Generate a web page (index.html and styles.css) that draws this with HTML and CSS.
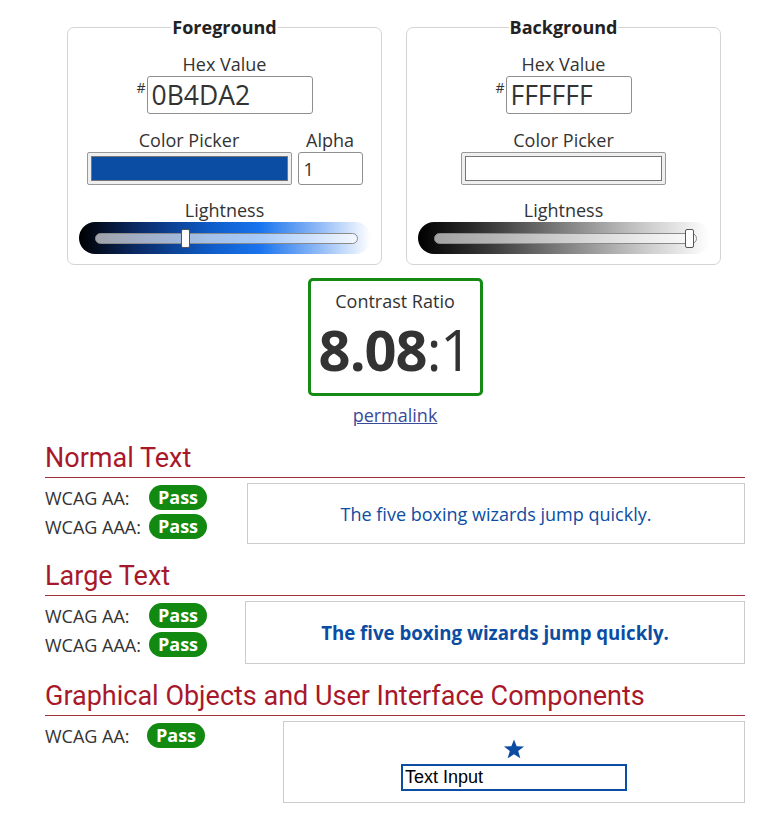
FILE: index.html
```html
<!DOCTYPE html>
<html lang="en">
<head>
<meta charset="utf-8">
<title>Contrast Checker</title>
<link rel="stylesheet" href="styles.css">
</head>
<body>
<main class="page">
  <div class="pickers">
    <fieldset class="picker">
      <legend class="picker-title">Foreground</legend>
      <div class="label">Hex Value</div>
      <div class="hex-row">
        <span class="hash">#</span>
        <input class="hex-input hex-fg" type="text" value="0B4DA2">
      </div>
      <div class="picker-row">
        <div class="field">
          <div class="label">Color Picker</div>
          <div class="swatch"><div class="swatch-fill fill-fg"></div></div>
        </div>
        <div class="field">
          <div class="label">Alpha</div>
          <input class="alpha-input" type="text" value="1">
        </div>
      </div>
      <div class="label">Lightness</div>
      <div class="slider slider-fg">
        <div class="track"><div class="thumb" style="left: calc(34% - 3px)"></div></div>
      </div>
    </fieldset>
    <fieldset class="picker">
      <legend class="picker-title">Background</legend>
      <div class="label">Hex Value</div>
      <div class="hex-row">
        <span class="hash">#</span>
        <input class="hex-input hex-bg" type="text" value="FFFFFF">
      </div>
      <div class="picker-row">
        <div class="field">
          <div class="label">Color Picker</div>
          <div class="swatch"><div class="swatch-fill fill-bg"></div></div>
        </div>
      </div>
      <div class="label">Lightness</div>
      <div class="slider slider-bg">
        <div class="track"><div class="thumb" style="left: calc(100% - 11px)"></div></div>
      </div>
    </fieldset>
  </div>

  <div class="ratio-wrap">
    <div class="ratio-box">
      <div class="ratio-label">Contrast Ratio</div>
      <div class="ratio-value"><b>8.08</b>:1</div>
    </div>
    <a class="permalink" href="#">permalink</a>
  </div>

  <section class="result result-normal">
    <h2 class="result-title">Normal Text</h2>
    <div class="result-body">
      <div class="checks">
        <div class="check"><span class="check-label">WCAG AA:</span><span class="pass">Pass</span></div>
        <div class="check"><span class="check-label">WCAG AAA:</span><span class="pass">Pass</span></div>
      </div>
      <div class="sample sample-normal">The five boxing wizards jump quickly.</div>
    </div>
  </section>

  <section class="result result-large">
    <h2 class="result-title">Large Text</h2>
    <div class="result-body">
      <div class="checks">
        <div class="check"><span class="check-label">WCAG AA:</span><span class="pass">Pass</span></div>
        <div class="check"><span class="check-label">WCAG AAA:</span><span class="pass">Pass</span></div>
      </div>
      <div class="sample sample-large">The five boxing wizards jump quickly.</div>
    </div>
  </section>

  <section class="result result-ui">
    <h2 class="result-title">Graphical Objects and User Interface Components</h2>
    <div class="result-body">
      <div class="checks checks-ui">
        <div class="check"><span class="check-label label-ui">WCAG AA:</span><span class="pass">Pass</span></div>
      </div>
      <div class="sample sample-ui">
        <svg class="star" width="22" height="22" viewBox="0 0 24 24" aria-hidden="true">
          <polygon points="12,1.5 14.9,9 23,9.3 16.6,14.3 18.9,22.2 12,17.6 5.1,22.2 7.4,14.3 1,9.3 9.1,9" fill="#0B4DA2"/>
        </svg>
        <input class="ui-input" type="text" value="Text Input">
      </div>
    </div>
  </section>
</main>
</body>
</html>
```

FILE: styles.css
```css
* { box-sizing: border-box; }

body {
  margin: 0;
  background: #fff;
  font-family: "Open Sans", "Liberation Sans", sans-serif;
  color: #333;
  font-size: 18px;
}

.page {
  width: 700px;
  margin-left: 45px;
  padding-top: 15px;
  padding-bottom: 10px;
}

.pickers {
  display: flex;
  gap: 24px;
  margin-left: 22px;
}

.picker {
  width: 315px;
  margin: 0;
  padding: 13px 10px 10px;
  border: 1px solid #d4d4d4;
  border-radius: 7px;
  display: flex;
  flex-direction: column;
  align-items: center;
  min-width: 0;
}

.picker-title {
  padding: 0 1px;
  margin: 0 auto;
  font-weight: 700;
  font-size: 18px;
  line-height: 24px;
  color: #222;
}

.label {
  font-size: 18px;
  line-height: 24px;
  color: #333;
  text-align: center;
}

.hex-row {
  display: flex;
  align-items: flex-start;
  margin-bottom: 14px;
}

.hash {
  font-size: 14px;
  line-height: 14px;
  margin-top: 5px;
  margin-right: 1px;
  color: #333;
}

.hex-input {
  height: 38px;
  border: 1px solid #8f8f8f;
  border-radius: 3px;
  font-family: "Open Sans", sans-serif;
  font-size: 26.5px;
  color: #333;
  padding: 0 4px;
  background: #fff;
}

.hex-fg { width: 166px; }
.hex-bg { width: 126px; }

.picker-row {
  display: flex;
  gap: 6px;
  margin-bottom: 13px;
}

.field {
  display: flex;
  flex-direction: column;
  align-items: center;
}

.swatch {
  width: 205px;
  height: 33px;
  border: 1px solid #999;
  border-radius: 2px;
  background: #efefef;
  padding: 3px;
}

.swatch-fill {
  width: 100%;
  height: 100%;
  border: 1px solid #767676;
}

.fill-fg { background: #0B4DA2; }
.fill-bg { background: #fff; }

.alpha-input {
  width: 65px;
  height: 33px;
  border: 1px solid #8f8f8f;
  border-radius: 3px;
  font-family: "Open Sans", sans-serif;
  font-size: 18px;
  color: #333;
  padding: 0 5px;
}

.slider {
  width: 292px;
  height: 32px;
  border-radius: 16px;
  padding: 11px 13px 10px 16px;
}

.slider-fg {
  background: linear-gradient(to right, #000 0%, #0b2a66 20%, #0e5cc8 45%, #1a74ee 62%, #8fb9f6 82%, #fff 100%);
}

.slider-bg {
  background: linear-gradient(to right, #000 0%, #3a3a3a 25%, #808080 50%, #c4c4c4 75%, #fff 100%);
}

.track {
  position: relative;
  height: 11px;
  border: 1px solid #8a8a8a;
  border-radius: 6px;
  background: rgba(255, 255, 255, 0.62);
}

.thumb {
  position: absolute;
  top: -5px;
  width: 9px;
  height: 19px;
  background: #fff;
  border: 1px solid #555;
  border-radius: 2px;
}

.ratio-wrap {
  display: flex;
  flex-direction: column;
  align-items: center;
  margin-top: 13px;
}

.ratio-box {
  width: 175px;
  height: 118px;
  border: 3px solid #158a15;
  border-radius: 5px;
  display: flex;
  flex-direction: column;
  align-items: center;
  padding-top: 8px;
}

.ratio-label {
  font-size: 18px;
  line-height: 24px;
  color: #333;
}

.ratio-value {
  font-size: 56px;
  line-height: 64px;
  color: #333;
  margin-top: 4px;
  letter-spacing: -1px;
}

.ratio-value b { font-weight: 700; }

.permalink {
  margin-top: 7px;
  font-size: 18px;
  line-height: 24px;
  color: #3a4a9c;
  text-decoration: underline;
}

.result { margin-top: 16px; }

.result-title {
  margin: 0;
  font-family: Roboto, "Liberation Sans", sans-serif;
  font-weight: 400;
  font-size: 27px;
  line-height: 30px;
  color: #a8182b;
  padding-bottom: 4px;
  border-bottom: 1px solid #a0303a;
}

.result-body {
  display: flex;
  margin-top: 5px;
}

.checks {
  width: 200px;
  display: flex;
  flex-direction: column;
}

.check {
  display: flex;
  align-items: center;
  height: 29px;
}

.check-label {
  width: 104px;
  font-size: 18px;
  color: #333;
}

.label-ui { width: 102px; }

.pass {
  background: #128a12;
  color: #fff;
  font-weight: 700;
  font-size: 18px;
  line-height: 25px;
  height: 25px;
  width: 58px;
  text-align: center;
  border-radius: 13px;
}

.sample {
  flex: 1;
  border: 1px solid #ccc;
  display: flex;
  align-items: center;
  justify-content: center;
  color: #0B4DA2;
}

.sample-normal {
  margin-left: 2px;
  height: 61px;
  font-size: 18px;
}

.sample-large {
  height: 63px;
  font-size: 18.67px;
  font-weight: 700;
}

.result-large { margin-top: 17px; }

.result-ui { margin-top: 17px; }

.checks-ui { width: 238px; }

.sample-ui {
  height: 82px;
  flex-direction: column;
  gap: 4px;
  padding-top: 4px;
}

.star { display: block; }

.ui-input {
  width: 226px;
  height: 27px;
  border: 2px solid #0B4DA2;
  font-family: "Liberation Sans", Arial, sans-serif;
  font-size: 18px;
  color: #000;
  padding: 0 2px;
}
```
